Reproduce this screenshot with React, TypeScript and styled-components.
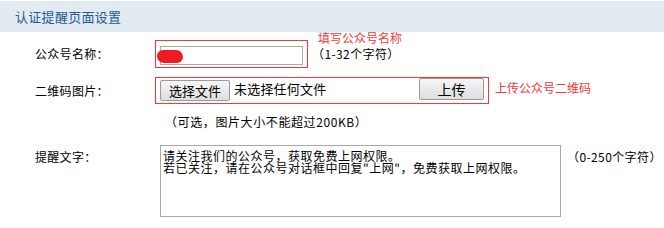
import React from "react";
import styled, { createGlobalStyle } from "styled-components";

const GlobalStyle = createGlobalStyle`
  html, body { margin: 0; padding: 0; background: #ffffff; }
  body {
    font-family: "Noto Sans CJK SC", "Noto Sans", sans-serif;
    font-size: 12px;
    color: #000;
  }
  * { box-sizing: border-box; }
`;

const Page = styled.div`
  width: 664px;
  height: 228px;
  padding-top: 1px;
  overflow: hidden;
`;

const Header = styled.div`
  height: 31px;
  background: #e3ebf2;
  display: flex;
  align-items: center;
  padding-left: 15px;
  font-size: 13px;
  color: #1f5a92;
  letter-spacing: 0.3px;
`;

const Form = styled.div`
  padding-top: 8px;
  display: flex;
  flex-direction: column;
`;

const Row = styled.div<{ $top?: number; $align?: string }>`
  position: relative;
  display: flex;
  align-items: ${(p) => p.$align || "center"};
  margin-top: ${(p) => p.$top || 0}px;
`;

const Label = styled.div<{ $width?: number; $padTop?: number }>`
  width: ${(p) => p.$width || 155}px;
  padding-left: 35px;
  padding-top: ${(p) => p.$padTop || 0}px;
  line-height: 12px;
  font-size: 12px;
  letter-spacing: 0.3px;
  flex-shrink: 0;
`;

const RedBox = styled.div<{ $w: number; $h: number }>`
  width: ${(p) => p.$w}px;
  height: ${(p) => p.$h}px;
  border: 1px solid #ef3b3b;
  flex-shrink: 0;
`;

const NameBox = styled(RedBox)`
  padding: 5px 4px 0 4px;
`;

const InputWrap = styled.div`
  position: relative;
  width: 143px;
  height: 19px;
`;

const TextInput = styled.input`
  width: 143px;
  height: 19px;
  border: 1px solid #a9a9a9;
  padding: 0 3px;
  margin: 0;
  outline: none;
  font-family: inherit;
  font-size: 12px;
  background: #fff;
`;

const Redact = styled.span`
  position: absolute;
  left: -3px;
  top: 4px;
  width: 26px;
  height: 13px;
  border-radius: 6px 7px 6px 7px;
  background: #ed1c24;
`;

const Hint = styled.span<{ $left?: number; $padTop?: number }>`
  margin-left: ${(p) => p.$left || 0}px;
  padding-top: ${(p) => p.$padTop || 0}px;
  font-size: 12px;
  line-height: 12px;
  letter-spacing: 0.4px;
  white-space: nowrap;
`;

const Note = styled.span`
  font-size: 12px;
  line-height: 12px;
  color: #f23a3a;
  white-space: nowrap;
`;

const FloatNote = styled(Note)`
  position: absolute;
  left: 318px;
  top: -8px;
`;

const SideNote = styled(Note)`
  margin-left: 6px;
  margin-bottom: 5px;
`;

const FileBox = styled(RedBox)`
  display: flex;
  align-items: flex-start;
  padding: 0 4px;
`;

const Button = styled.button<{ $w: number; $h: number; $fs: number; $top: number }>`
  width: ${(p) => p.$w}px;
  height: ${(p) => p.$h}px;
  margin-top: ${(p) => p.$top}px;
  padding: 0;
  border: 1px solid #9a9a9a;
  border-radius: 2px;
  background: linear-gradient(#f6f6f6, #dedede);
  font-family: inherit;
  font-size: ${(p) => p.$fs}px;
  line-height: 1;
  color: #000;
  flex-shrink: 0;
`;

const UploadButton = styled(Button)`
  margin-left: auto;
`;

const FileName = styled.span`
  margin-left: 4px;
  margin-top: 4px;
  font-size: 13px;
  line-height: 14px;
  letter-spacing: 0.2px;
  white-space: nowrap;
`;

const HintLine = styled.div`
  margin-top: 12px;
  padding-left: 165px;
  font-size: 12px;
  line-height: 12px;
  letter-spacing: 0.6px;
  white-space: nowrap;
`;

const TextArea = styled.textarea`
  width: 401px;
  height: 72px;
  margin: 0 0 0 5px;
  padding: 4px 2px;
  border: 1px solid #a9a9a9;
  resize: none;
  outline: none;
  font-family: inherit;
  font-size: 12px;
  line-height: 12px;
  letter-spacing: 0.5px;
  color: #000;
  flex-shrink: 0;
`;

const message =
  "请关注我们的公众号，获取免费上网权限。\n若已关注，请在公众号对话框中回复\"上网\"，免费获取上网权限。";

export default function App() {
  return (
    <>
      <GlobalStyle />
      <Page>
        <Header>认证提醒页面设置</Header>
        <Form>
          <Row>
            <Label>公众号名称：</Label>
            <NameBox $w={153} $h={28}>
              <InputWrap>
                <TextInput type="text" readOnly />
                <Redact />
              </InputWrap>
            </NameBox>
            <Hint $left={4}>（1-32个字符）</Hint>
            <FloatNote>填写公众号名称</FloatNote>
          </Row>
          <Row $top={9}>
            <Label>二维码图片：</Label>
            <FileBox $w={334} $h={27}>
              <Button $w={70} $h={21} $fs={13} $top={2}>
                选择文件
              </Button>
              <FileName>未选择任何文件</FileName>
              <UploadButton $w={65} $h={22} $fs={14} $top={0}>
                上传
              </UploadButton>
            </FileBox>
            <SideNote>上传公众号二维码</SideNote>
          </Row>
          <HintLine>（可选，图片大小不能超过200KB）</HintLine>
          <Row $top={17} $align="flex-start">
            <Label $padTop={6}>提醒文字：</Label>
            <TextArea readOnly defaultValue={message} />
            <Hint $left={6} $padTop={6}>
              （0-250个字符）
            </Hint>
          </Row>
        </Form>
      </Page>
    </>
  );
}
